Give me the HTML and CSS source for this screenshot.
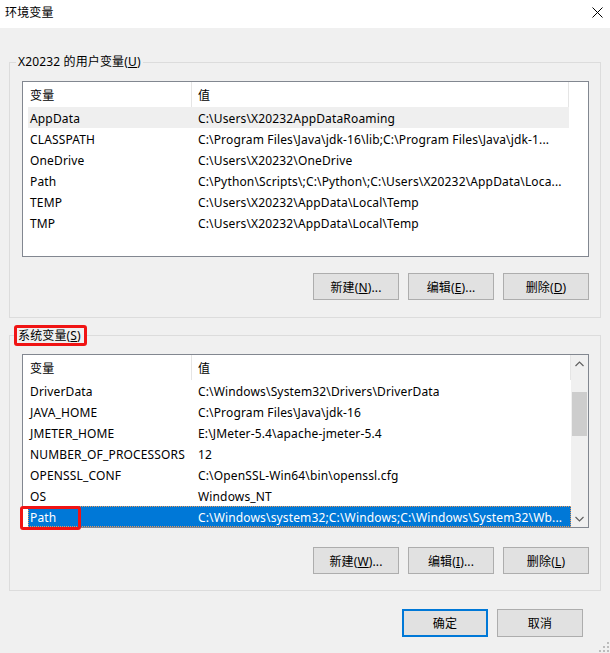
FILE: index.html
```html
<!DOCTYPE html>
<html>
<head>
    <meta charset="UTF-8">
    <title>环境变量</title>
    <link rel="stylesheet" href="styles.css">
</head>
<body>
    <div class="titlebar">
        <span class="title">环境变量</span>
        <svg class="close" width="11" height="11" viewBox="0 0 11 11">
            <path d="M0.5 0.5 L10.5 10.5 M10.5 0.5 L0.5 10.5" stroke="#000" stroke-width="1" fill="none"/>
        </svg>
    </div>
    <div class="dialog">
        <fieldset class="group user">
            <legend>X20232 的用户变量(<u>U</u>)</legend>
            <div class="list userList">
                <div class="rows">
                    <div class="row head">
                        <div class="c1">变量</div>
                        <div class="c2">值</div>
                    </div>
                    <div class="row hover">
                        <div class="c1">AppData</div>
                        <div class="c2">C:\Users\X20232AppDataRoaming</div>
                    </div>
                    <div class="row">
                        <div class="c1">CLASSPATH</div>
                        <div class="c2">C:\Program Files\Java\jdk-16\lib;C:\Program Files\Java\jdk-1...</div>
                    </div>
                    <div class="row">
                        <div class="c1">OneDrive</div>
                        <div class="c2">C:\Users\X20232\OneDrive</div>
                    </div>
                    <div class="row">
                        <div class="c1">Path</div>
                        <div class="c2">C:\Python\Scripts\;C:\Python\;C:\Users\X20232\AppData\Loca...</div>
                    </div>
                    <div class="row">
                        <div class="c1">TEMP</div>
                        <div class="c2">C:\Users\X20232\AppData\Local\Temp</div>
                    </div>
                    <div class="row">
                        <div class="c1">TMP</div>
                        <div class="c2">C:\Users\X20232\AppData\Local\Temp</div>
                    </div>
                </div>
            </div>
            <div class="buttons">
                <button>新建(<u>N</u>)...</button>
                <button>编辑(<u>E</u>)...</button>
                <button>删除(<u>D</u>)</button>
            </div>
        </fieldset>

        <fieldset class="group system">
            <legend class="marked">系统变量(<u>S</u>)</legend>
            <div class="list systemList">
                <div class="rows">
                    <div class="row head">
                        <div class="c1">变量</div>
                        <div class="c2">值</div>
                    </div>
                    <div class="row">
                        <div class="c1">DriverData</div>
                        <div class="c2">C:\Windows\System32\Drivers\DriverData</div>
                    </div>
                    <div class="row">
                        <div class="c1">JAVA_HOME</div>
                        <div class="c2">C:\Program Files\Java\jdk-16</div>
                    </div>
                    <div class="row">
                        <div class="c1">JMETER_HOME</div>
                        <div class="c2">E:\JMeter-5.4\apache-jmeter-5.4</div>
                    </div>
                    <div class="row">
                        <div class="c1">NUMBER_OF_PROCESSORS</div>
                        <div class="c2">12</div>
                    </div>
                    <div class="row">
                        <div class="c1">OPENSSL_CONF</div>
                        <div class="c2">C:\OpenSSL-Win64\bin\openssl.cfg</div>
                    </div>
                    <div class="row">
                        <div class="c1">OS</div>
                        <div class="c2">Windows_NT</div>
                    </div>
                    <div class="row selected">
                        <div class="c1">Path</div>
                        <div class="c2">C:\Windows\system32;C:\Windows;C:\Windows\System32\Wb...</div>
                        <span class="mark"></span>
                    </div>
                </div>
                <div class="scrollbar">
                    <div class="arrow">
                        <svg width="9" height="6" viewBox="0 0 9 6"><path d="M0.5 5 L4.5 1 L8.5 5" stroke="#606060" stroke-width="1.2" fill="none"/></svg>
                    </div>
                    <div class="track"><div class="thumb"></div></div>
                    <div class="arrow">
                        <svg width="9" height="6" viewBox="0 0 9 6"><path d="M0.5 1 L4.5 5 L8.5 1" stroke="#606060" stroke-width="1.2" fill="none"/></svg>
                    </div>
                </div>
            </div>
            <div class="buttons sysButtons">
                <button>新建(<u>W</u>)...</button>
                <button>编辑(<u>I</u>)...</button>
                <button>删除(<u>L</u>)</button>
            </div>
        </fieldset>

        <div class="footer">
            <button class="default">确定</button>
            <button>取消</button>
        </div>
    </div>
    <svg class="grip" width="12" height="12" viewBox="0 0 12 12">
        <rect x="9" y="1" width="2" height="2" fill="#bcbcbc"/>
        <rect x="5" y="5" width="2" height="2" fill="#bcbcbc"/>
        <rect x="9" y="5" width="2" height="2" fill="#bcbcbc"/>
        <rect x="1" y="9" width="2" height="2" fill="#bcbcbc"/>
        <rect x="5" y="9" width="2" height="2" fill="#bcbcbc"/>
        <rect x="9" y="9" width="2" height="2" fill="#bcbcbc"/>
    </svg>
</body>
</html>
```

FILE: styles.css
```css
html, body {
    margin: 0;
    height: 653px;
    overflow: hidden;
}
body {
    position: relative;
    background-color: #f0f0f0;
    font-family: "Noto Sans", "Noto Sans CJK SC", sans-serif;
    font-size: 12px;
    letter-spacing: 0.15px;
    color: #000;
}
.titlebar {
    height: 28px;
    background-color: #fff;
    display: flex;
    align-items: center;
    justify-content: space-between;
    padding: 0 7px 0 5px;
}
.title {
    line-height: 16px;
    margin-top: -2px;
}
.close {
    margin-top: -4px;
}
.dialog {
    padding: 26px 9px 0;
}
.group {
    margin: 0;
    min-width: 0;
    border: 1px solid #dcdcdc;
    padding: 11px 11px 17px 12px;
}
.group legend {
    line-height: 16px;
    padding: 0 2px;
    margin-left: -6px;
}
.system {
    margin-top: 7px;
    padding-top: 8px;
    padding-bottom: 16px;
}
.group legend.marked {
    line-height: 15px;
    border: 3px solid #f01414;
    border-radius: 3px;
    padding: 0 3px 0 1px;
    margin-left: -8px;
}
.list {
    display: flex;
    background-color: #fff;
    border: 1px solid #828790;
}
.userList {
    height: 174px;
}
.systemList {
    height: 172px;
}
.rows {
    margin-left: 5px;
    width: 541px;
}
.systemList .rows {
    width: auto;
    flex: 1;
    min-width: 0;
}
.row {
    position: relative;
    display: flex;
    height: 21px;
    align-items: center;
    white-space: nowrap;
}
.row .c1 {
    width: 161px;
    padding: 1px 0 0 2px;
    overflow: hidden;
}
.row .c2 {
    flex: 1;
    min-width: 0;
    padding: 1px 0 0 7px;
    overflow: hidden;
}
.row.head {
    height: 25px;
    border-right: 1px solid #e5e5e5;
}
.row.head .c2 {
    align-self: stretch;
    display: flex;
    align-items: center;
    border-left: 1px solid #e5e5e5;
    padding-left: 6px;
}
.row.hover {
    background-color: #efefef;
}
.row.selected {
    background-color: #0078d7;
    color: #fff;
    box-sizing: border-box;
    border: 1px dotted #e89a5c;
}
.row.selected .c1 {
    padding-left: 1px;
}
.mark {
    position: absolute;
    left: -9px;
    top: -1px;
    width: 55px;
    height: 18px;
    border: 3px solid #f01414;
    border-radius: 3px;
}
.scrollbar {
    width: 17px;
    display: flex;
    flex-direction: column;
    background-color: #f0f0f0;
}
.arrow {
    height: 17px;
    display: flex;
    align-items: center;
    justify-content: center;
}
.track {
    flex: 1;
    padding: 20px 1px 0;
}
.thumb {
    height: 44px;
    background-color: #cdcdcd;
}
.buttons {
    display: flex;
    justify-content: flex-end;
    gap: 9px;
    margin-top: 16px;
}
.sysButtons {
    margin-top: 19px;
}
button {
    width: 86px;
    height: 27px;
    margin: 0;
    padding: 0;
    background-color: #e1e1e1;
    border: 1px solid #adadad;
    border-radius: 0;
    font-family: "Noto Sans", "Noto Sans CJK SC", sans-serif;
    font-size: 12px;
    letter-spacing: 0.15px;
    color: #000;
}
.footer {
    display: flex;
    justify-content: flex-end;
    gap: 9px;
    margin-top: 18px;
    padding-right: 18px;
}
.footer button {
    height: 28px;
}
button.default {
    border: 2px solid #0078d7;
}
.grip {
    position: absolute;
    right: 0;
    bottom: 0;
}
```
